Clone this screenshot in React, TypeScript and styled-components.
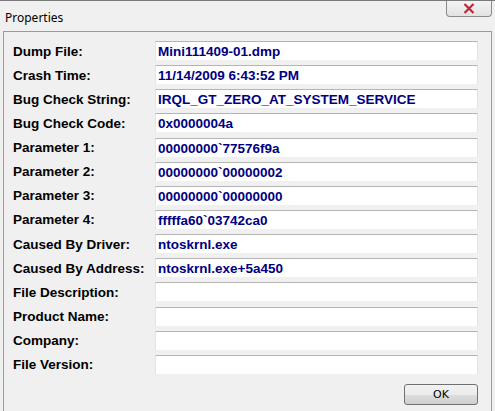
import React from 'react';
import styled, { createGlobalStyle } from 'styled-components';

const GlobalStyle = createGlobalStyle`
  html, body {
    margin: 0;
    padding: 0;
    background: #f0f0f0;
  }
  body {
    width: 495px;
    height: 411px;
    overflow: hidden;
  }
`;

const Window = styled.div`
  display: flex;
  flex-direction: column;
  width: 495px;
  height: 411px;
  background: #f0f0f0;
  border-top: 1px solid #7a7a7a;
  box-sizing: border-box;
  font-family: Tahoma, 'DejaVu Sans', sans-serif;
`;

const TitleBar = styled.div`
  display: flex;
  align-items: flex-start;
  justify-content: space-between;
  height: 30px;
  padding: 0 3px 0 5px;
`;

const Title = styled.span`
  margin-top: 8px;
  font-family: 'Noto Sans', 'Open Sans', sans-serif;
  font-size: 12px;
  color: #000;
`;

const CloseButton = styled.div`
  display: flex;
  align-items: center;
  justify-content: center;
  width: 44px;
  height: 15px;
  border: 1px solid #8a8a8a;
  border-top: none;
  border-radius: 0 0 4px 4px;
  background: linear-gradient(#f4f4f4, #e2e2e2);
`;

const Panel = styled.div`
  flex: 1;
  margin: 0 3px;
  border: 1px solid #9a9a9a;
  border-bottom: none;
  padding: 9px 13px 0 9px;
  display: flex;
  flex-direction: column;
`;

const Grid = styled.div`
  display: grid;
  grid-template-columns: 142px 1fr;
  grid-auto-rows: 19px;
  row-gap: 5.15px;
`;

const Label = styled.div`
  display: flex;
  align-items: center;
  padding-top: 1px;
  font-family: 'Liberation Sans', Arial, sans-serif;
  font-weight: bold;
  font-size: 13.5px;
  color: #000;
  white-space: nowrap;
`;

const Field = styled.div`
  display: flex;
  align-items: center;
  padding: 1px 0 0 2px;
  background: #fff;
  border-top: 1px solid #b5b5b5;
  border-left: 1px solid #e3e3e3;
  border-right: 1px solid #e3e3e3;
  font-family: 'Liberation Sans', Arial, sans-serif;
  font-weight: bold;
  font-size: 13.5px;
  color: #00007f;
  white-space: nowrap;
`;

const Footer = styled.div`
  display: flex;
  justify-content: flex-end;
  margin-top: 10px;
`;

const OkButton = styled.button`
  width: 74px;
  height: 21px;
  padding: 0;
  border: 1px solid #707070;
  border-radius: 3px;
  background: linear-gradient(#f2f2f2 0%, #ebebeb 50%, #dddddd 51%, #cfcfcf 100%);
  font-family: 'DejaVu Sans', sans-serif;
  font-size: 11px;
  color: #000;
`;

const rows: [string, string][] = [
  ['Dump File:', 'Mini111409-01.dmp'],
  ['Crash Time:', '11/14/2009 6:43:52 PM'],
  ['Bug Check String:', 'IRQL_GT_ZERO_AT_SYSTEM_SERVICE'],
  ['Bug Check Code:', '0x0000004a'],
  ['Parameter 1:', '00000000`77576f9a'],
  ['Parameter 2:', '00000000`00000002'],
  ['Parameter 3:', '00000000`00000000'],
  ['Parameter 4:', 'fffffa60`03742ca0'],
  ['Caused By Driver:', 'ntoskrnl.exe'],
  ['Caused By Address:', 'ntoskrnl.exe+5a450'],
  ['File Description:', ''],
  ['Product Name:', ''],
  ['Company:', ''],
  ['File Version:', ''],
];

export default function App() {
  return (
    <>
      <GlobalStyle />
      <Window>
        <TitleBar>
          <Title>Properties</Title>
          <CloseButton>
            <svg width="12" height="11" viewBox="0 0 12 11">
              <path d="M1.5 1 L10.5 10 M10.5 1 L1.5 10" stroke="#c0283a" strokeWidth="2.2" fill="none" />
            </svg>
          </CloseButton>
        </TitleBar>
        <Panel>
          <Grid>
            {rows.map(([label, value]) => (
              <React.Fragment key={label}>
                <Label>{label}</Label>
                <Field>{value}</Field>
              </React.Fragment>
            ))}
          </Grid>
          <Footer>
            <OkButton>OK</OkButton>
          </Footer>
        </Panel>
      </Window>
    </>
  );
}
